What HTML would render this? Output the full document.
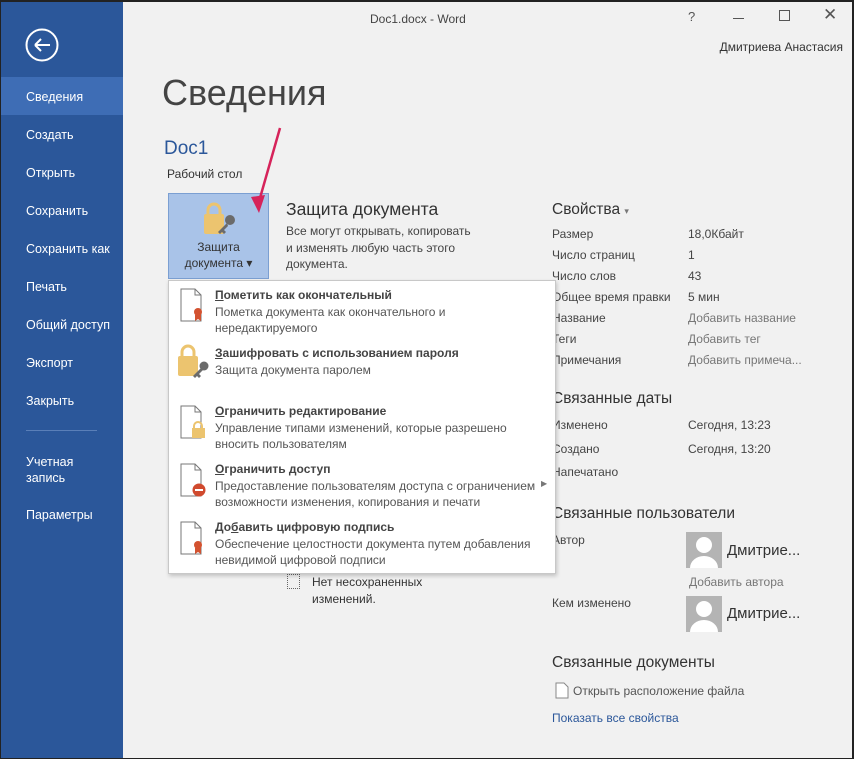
<!DOCTYPE html>
<html><head><meta charset="utf-8"><style>
*{margin:0;padding:0;box-sizing:border-box}
body{width:854px;height:759px;overflow:hidden;background:#f1f1f1;font-family:"Liberation Sans",sans-serif;font-size:12px;color:#444;position:relative}
.a{position:absolute;white-space:nowrap}
#frame{position:absolute;left:0;top:0;width:854px;height:759px;border:1px solid #222;border-width:2px 2px 1px 1px;pointer-events:none;z-index:9}
#side{position:absolute;left:0;top:0;width:123px;height:759px;background:#2b579a}
.s{position:absolute;left:26px;color:#fff;font-size:12.5px}
.lbl{position:absolute;left:552px;color:#444}
.val{position:absolute;left:688px;color:#444}
.g{color:#777}
.h2{font-size:15.5px;color:#333}
.mi{position:absolute;left:215px;color:#444;white-space:nowrap}
.mi b{display:block;font-size:12px;color:#444;margin-bottom:3px}
.mi span{display:block;line-height:15.5px;color:#555}
</style></head><body>
<div id="side">
 <svg class="a" style="left:25px;top:28px" width="34" height="34"><circle cx="17" cy="17" r="15.5" fill="none" stroke="#fff" stroke-width="2"/><path d="M10 17H25M10 17l6-6M10 17l6 6" stroke="#fff" stroke-width="2" fill="none"/></svg>
 <div class="a" style="left:0;top:77px;width:123px;height:38px;background:#3e6db5"></div>
 <div class="s" style="top:90px">Сведения</div>
 <div class="s" style="top:128px">Создать</div>
 <div class="s" style="top:166px">Открыть</div>
 <div class="s" style="top:204px">Сохранить</div>
 <div class="s" style="top:242px">Сохранить как</div>
 <div class="s" style="top:280px">Печать</div>
 <div class="s" style="top:318px">Общий доступ</div>
 <div class="s" style="top:356px">Экспорт</div>
 <div class="s" style="top:394px">Закрыть</div>
 <div class="a" style="left:26px;top:430px;width:71px;height:1px;background:#5a7fb8"></div>
 <div class="s" style="top:454px;line-height:16px">Учетная<br>запись</div>
 <div class="s" style="top:508px">Параметры</div>
</div>
<div class="a" style="left:370px;top:12px;color:#444">Doc1.docx - Word</div>
<div class="a" style="left:688px;top:9px;color:#555;font-size:13px">?</div>
<div class="a" style="left:733px;top:18px;width:11px;height:1px;background:#555"></div>
<div class="a" style="left:779px;top:10px;width:11px;height:11px;border:1px solid #555"></div>
<div class="a" style="left:823px;top:5px;color:#555;font-size:17px">✕</div>
<div class="a" style="right:11px;top:40px;color:#333">Дмитриева Анастасия</div>
<div class="a" style="left:162px;top:72px;font-size:36px;color:#444">Сведения</div>
<div class="a" style="left:164px;top:138px;font-size:19px;color:#2b579a">Doc1</div>
<div class="a" style="left:167px;top:167px;color:#333">Рабочий стол</div>
<div class="a" style="left:168px;top:193px;width:101px;height:86px;background:#a9c3e8;border:1px solid #7b9fd2"></div>
<svg class="a" style="left:202px;top:202px" width="36" height="36"><rect x="2" y="12" width="20" height="20" rx="2" fill="#ecc46f"/><path d="M6 13V8a6 6 0 0 1 12 0v5" fill="none" stroke="#ecc46f" stroke-width="3"/><circle cx="28" cy="18" r="5" fill="#6b6b6b"/><path d="M25 21l-9 9 2 2 2-2 2 2 2-2-2-2 4-4" fill="#6b6b6b"/></svg>
<div class="a" style="left:168px;top:239px;width:101px;text-align:center;color:#333;line-height:16px">Защита<br>документа ▾</div>
<svg class="a" style="left:245px;top:125px;z-index:5" width="40" height="95"><path d="M35 3L13 80" stroke="#d6235a" stroke-width="2.5"/><path d="M6 72l8 16 6-18z" fill="#d6235a"/></svg>
<div class="a" style="left:286px;top:199px;font-size:17.5px;color:#333">Защита документа</div>
<div class="a" style="left:286px;top:223px;color:#444;line-height:16.5px">Все могут открывать, копировать<br>и изменять любую часть этого<br>документа.</div>
<div class="a" style="left:168px;top:280px;width:388px;height:294px;background:#fff;border:1px solid #c8c8c8;box-shadow:1px 2px 4px rgba(0,0,0,.2);z-index:3">
</div>
<div style="position:absolute;left:0;top:0;z-index:4">
 <svg class="a" style="left:178px;top:287px" width="30" height="40"><path d="M3 2h14l6 6v26H3z" fill="#fff" stroke="#777"/><path d="M17 2v6h6" fill="none" stroke="#777"/><circle cx="20" cy="25" r="4" fill="#d35230"/><path d="M17 28v6l3-2 3 2v-6" fill="#d35230"/></svg>
 <div class="mi" style="top:288px"><b><u>П</u>ометить как окончательный</b><span>Пометка документа как окончательного и<br>нередактируемого</span></div>
 <svg class="a" style="left:176px;top:344px" width="36" height="36"><rect x="2" y="12" width="20" height="20" rx="2" fill="#ecc46f"/><path d="M6 13V8a6 6 0 0 1 12 0v5" fill="none" stroke="#ecc46f" stroke-width="3"/><circle cx="28" cy="22" r="4.5" fill="#6b6b6b"/><path d="M25 24l-8 8 2 2 2-2 2 2 2-2-2-2 4-4" fill="#6b6b6b"/></svg>
 <div class="mi" style="top:346px"><b><u>З</u>ашифровать с использованием пароля</b><span>Защита документа паролем</span></div>
 <svg class="a" style="left:178px;top:404px" width="30" height="40"><path d="M3 2h14l6 6v26H3z" fill="#fff" stroke="#777"/><path d="M17 2v6h6" fill="none" stroke="#777"/><rect x="14" y="24" width="13" height="10" fill="#ecc46f"/><path d="M16 25v-3a4 4 0 0 1 8 0v3" fill="none" stroke="#ecc46f" stroke-width="2"/></svg>
 <div class="mi" style="top:404px"><b><u>О</u>граничить редактирование</b><span>Управление типами изменений, которые разрешено<br>вносить пользователям</span></div>
 <svg class="a" style="left:178px;top:462px" width="30" height="40"><path d="M3 2h14l6 6v26H3z" fill="#fff" stroke="#777"/><path d="M17 2v6h6" fill="none" stroke="#777"/><circle cx="21" cy="28" r="6.5" fill="#d04a2e"/><rect x="17" y="27" width="8" height="2" fill="#fff"/></svg>
 <div class="mi" style="top:462px"><b><u>О</u>граничить доступ</b><span>Предоставление пользователям доступа с ограничением<br>возможности изменения, копирования и печати</span></div>
 <div class="a" style="left:541px;top:479px;color:#777;font-size:8px">▶</div>
 <svg class="a" style="left:178px;top:520px" width="30" height="40"><path d="M3 2h14l6 6v26H3z" fill="#fff" stroke="#777"/><path d="M17 2v6h6" fill="none" stroke="#777"/><circle cx="20" cy="25" r="4" fill="#d35230"/><path d="M17 28v6l3-2 3 2v-6" fill="#d35230"/></svg>
 <div class="mi" style="top:520px"><b>До<u>б</u>авить цифровую подпись</b><span>Обеспечение целостности документа путем добавления<br>невидимой цифровой подписи</span></div>
</div>
<div class="a" style="left:287px;top:574px;width:13px;height:15px;border:1px dotted #666"></div>
<div class="a" style="left:312px;top:574px;color:#333;line-height:17px">Нет несохраненных<br>изменений.</div>
<div class="a h2" style="left:552px;top:201px">Свойства <span style="font-size:9px;color:#777">▾</span></div>
<div class="lbl" style="top:227px">Размер</div><div class="val" style="top:227px">18,0Кбайт</div>
<div class="lbl" style="top:248px">Число страниц</div><div class="val" style="top:248px">1</div>
<div class="lbl" style="top:269px">Число слов</div><div class="val" style="top:269px">43</div>
<div class="lbl" style="top:290px">Общее время правки</div><div class="val" style="top:290px">5 мин</div>
<div class="lbl" style="top:311px">Название</div><div class="val g" style="top:311px">Добавить название</div>
<div class="lbl" style="top:332px">Теги</div><div class="val g" style="top:332px">Добавить тег</div>
<div class="lbl" style="top:353px">Примечания</div><div class="val g" style="top:353px">Добавить примеча...</div>
<div class="a h2" style="left:552px;top:390px">Связанные даты</div>
<div class="lbl" style="top:418px">Изменено</div><div class="val" style="top:418px">Сегодня, 13:23</div>
<div class="lbl" style="top:442px">Создано</div><div class="val" style="top:442px">Сегодня, 13:20</div>
<div class="lbl" style="top:465px">Напечатано</div>
<div class="a h2" style="left:552px;top:505px">Связанные пользователи</div>
<div class="lbl" style="top:533px">Автор</div>
<svg class="a" style="left:686px;top:532px" width="36" height="36"><rect width="36" height="36" fill="#b4b4b4"/><circle cx="18" cy="13" r="8" fill="#fff"/><path d="M4 36a14 12 0 0 1 28 0z" fill="#fff"/></svg>
<div class="a" style="left:727px;top:542px;font-size:15px;color:#333">Дмитрие...</div>
<div class="a g" style="left:689px;top:575px">Добавить автора</div>
<div class="lbl" style="top:596px">Кем изменено</div>
<svg class="a" style="left:686px;top:596px" width="36" height="36"><rect width="36" height="36" fill="#b4b4b4"/><circle cx="18" cy="13" r="8" fill="#fff"/><path d="M4 36a14 12 0 0 1 28 0z" fill="#fff"/></svg>
<div class="a" style="left:727px;top:605px;font-size:15px;color:#333">Дмитрие...</div>
<div class="a h2" style="left:552px;top:654px">Связанные документы</div>
<svg class="a" style="left:555px;top:682px" width="14" height="17"><path d="M1 1h8l4 4v11H1z" fill="#fff" stroke="#888"/></svg>
<div class="a" style="left:573px;top:684px;color:#555">Открыть расположение файла</div>
<div class="a" style="left:552px;top:711px;color:#2b579a">Показать все свойства</div>
<div id="frame"></div>
</body></html>
